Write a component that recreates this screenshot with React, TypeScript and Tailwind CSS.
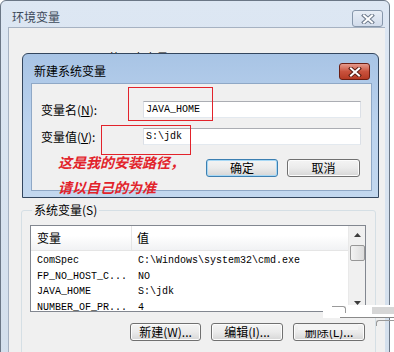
import React from "react";

const cjk = "font-['Noto_Sans_CJK_SC',sans-serif]";
const mono = "font-['Liberation_Mono','Noto_Sans_CJK_SC',monospace]";

const CloseGlyph = ({ dark }: { dark?: boolean }) => (
  <svg width="14" height="10" viewBox="0 0 14 10">
    <path d="M3 1.5 L11 8.5 M11 1.5 L3 8.5" stroke={dark ? "#5a1c12" : "#6d7a8c"} strokeWidth="4" strokeLinecap="square" />
    <path d="M3 1.5 L11 8.5 M11 1.5 L3 8.5" stroke="#ffffff" strokeWidth="2" strokeLinecap="square" />
  </svg>
);

const WinButton = ({ label, primary, className }: { label: React.ReactNode; primary?: boolean; className?: string }) => (
  <div
    className={`h-[18px] rounded-[3px] border flex items-center justify-center text-[12px] leading-none text-black bg-gradient-to-b from-[#f4f4f4] via-[#ebebeb] to-[#d6d6d6] ${
      primary ? "border-[#3c7fb1] shadow-[inset_0_0_0_1px_#a7d8f5]" : "border-[#707070] shadow-[inset_0_0_0_1px_#fcfcfc]"
    } ${cjk} ${className ?? ""}`}
  >
    {label}
  </div>
);

const rows = [
  ["ComSpec", "C:\\Windows\\system32\\cmd.exe"],
  ["FP_NO_HOST_C...", "NO"],
  ["JAVA_HOME", "S:\\jdk"],
  ["NUMBER_OF_PR...", "4"],
];

export default function App() {
  return (
    <div className="relative w-[394px] h-[352px] overflow-hidden bg-white">
      {/* outer window: 环境变量 (inactive) */}
      <div className="w-[390px] h-[380px] rounded-t-[6px] border border-[#6b7786] bg-gradient-to-b from-[#dde7f3] to-[#d3dfec] pl-[7px] pr-[4px] flex flex-col">
        <div className="h-[29px] flex items-start justify-between">
          <span className={`mt-[10px] ml-[4px] text-[12px] leading-none text-[#3d4a5a] ${cjk}`}>环境变量</span>
          <div className="mt-[9px] mr-[2px] w-[31px] h-[17px] rounded-[3px] border border-[#8797ab] bg-gradient-to-b from-[#e8eef6] to-[#d2dceb] flex items-center justify-center">
            <CloseGlyph />
          </div>
        </div>
        <div className="flex-1 border-t border-l border-[#a6b2c2] bg-[#f0f0f0] flex flex-col">
          {/* user variables (hidden behind dialog) */}
          <div className="h-[176px] pl-[20px] pt-[17px]">
            <span className={`text-[12px] leading-none text-black ${cjk}`}>Administrator 的用户变量(U)</span>
          </div>
          {/* system variables group */}
          <fieldset className="ml-[12px] w-[355px] h-[200px] border border-[#d5dfe5] rounded-[3px] px-[8px]">
            <legend className={`ml-[2px] px-[2px] text-[12px] leading-none text-black ${cjk}`}>系统变量(S)</legend>
            <div className="mt-[9px] w-[336px] h-[87px] border border-[#828790] bg-white flex">
              <div className="flex-1 flex flex-col overflow-hidden">
                <div className="h-[25px] shrink-0 flex bg-gradient-to-b from-white from-40% to-[#f1f2f4] border-b border-[#e5e5e5]">
                  <div className={`w-[101px] border-r border-[#e5e5e5] pl-[6px] flex items-center text-[12px] ${cjk}`}>变量</div>
                  <div className={`pl-[5px] flex items-center text-[12px] ${cjk}`}>值</div>
                </div>
                <div className="pt-[2px] overflow-hidden">
                  {rows.map(([k, v]) => (
                    <div key={k} className={`h-[15.5px] flex items-center text-[10px] text-black ${mono}`}>
                      <div className="w-[101px] pl-[6px] whitespace-nowrap">{k}</div>
                      <div className="pl-[6px] whitespace-nowrap">{v}</div>
                    </div>
                  ))}
                </div>
              </div>
              <div className="w-[17px] bg-[#f0f0f0] border-l border-[#e9e9e9] flex flex-col items-center">
                <div className="h-[17px] flex items-center justify-center">
                  <svg width="7" height="4" viewBox="0 0 7 4"><path d="M0 4 L3.5 0 L7 4 Z" fill="#3c3c3c" /></svg>
                </div>
                <div className="mt-[2px] w-[15px] h-[16px] rounded-[2px] border border-[#979797] bg-gradient-to-r from-[#f3f3f3] to-[#dcdcdc]" />
                <div className="flex-1" />
                <div className="h-[17px] flex items-center justify-center">
                  <svg width="7" height="4" viewBox="0 0 7 4"><path d="M0 0 L7 0 L3.5 4 Z" fill="#3c3c3c" /></svg>
                </div>
              </div>
            </div>
            <div className="mt-[11px] mr-[2px] flex justify-end gap-[10px]">
              <WinButton className="w-[71px]" label="新建(W)..." />
              <WinButton className="w-[72px]" label="编辑(I)..." />
              <WinButton className="w-[72px] text-[#6b6b6b]" label="删除(L)..." />
            </div>
          </fieldset>
        </div>
      </div>

      {/* inner dialog: 新建系统变量 (active) */}
      <div className="absolute left-[22px] top-[53px] w-[357px] h-[145px] rounded-t-[6px] border border-[#33465e] bg-gradient-to-b from-[#a8c4e5] via-[#bcd3ee] to-[#c3d8ef] pl-[8px] pr-[6px] pb-[6px] flex flex-col">
        <div className="h-[29px] flex items-start justify-between">
          <span className={`mt-[11px] ml-[3px] text-[12px] leading-none text-black ${cjk}`}>新建系统变量</span>
          <div className="mt-[9px] mr-[2px] w-[31px] h-[17px] rounded-[3px] border border-[#6b1f14] bg-gradient-to-b from-[#e59a8c] via-[#c9523d] to-[#b53a24] flex items-center justify-center">
            <CloseGlyph dark />
          </div>
        </div>
        <div className="flex-1 bg-[#f0f0f0] border border-[#8fa8c6] pl-[9px] pr-[10px] pt-[17px]">
          <div className="grid grid-cols-[102px_1fr] gap-y-[10px] items-center">
            <div className={`text-[12px] leading-none text-black ${cjk}`}>变量名(<span className="underline">N</span>):</div>
            <div className={`h-[17px] bg-white border border-[#abadb3] border-b-[#e3e9ef] border-x-[#dbdfe6] pl-[2px] flex items-center text-[10px] ${mono}`}>JAVA_HOME</div>
            <div className={`text-[12px] leading-none text-black ${cjk}`}>变量值(<span className="underline">V</span>):</div>
            <div className={`h-[17px] bg-white border border-[#abadb3] border-b-[#e3e9ef] border-x-[#dbdfe6] pl-[2px] flex items-center text-[10px] ${mono}`}>S:\jdk</div>
          </div>
          <div className="mt-[14px] mr-[1px] flex justify-end gap-[9px]">
            <WinButton primary className="w-[72px]" label="确定" />
            <WinButton className="w-[73px]" label="取消" />
          </div>
        </div>
      </div>

      {/* red annotations drawn over the screenshot */}
      <div className="absolute left-[128px] top-[87px] w-[85px] h-[34px] border border-[#e2232b]" />
      <div className="absolute left-[101px] top-[125px] w-[90px] h-[30px] border border-[#e2232b]" />
      <div className={`absolute left-[58px] top-[150px] text-[14px] leading-[25px] font-bold italic text-[#e2232b] ${cjk}`}>
        <div>这是我的安装路径，</div>
        <div>请以自己的为准</div>
      </div>

      {/* watermark smudge over the lower right corner */}
      <div className="absolute left-[323px] top-[305px] w-[71px] h-[13px] bg-white" />
      <div className="absolute left-[332px] top-[306px] w-[14px] h-[7px] rounded-tr-[3px] border-t border-r border-[#9a9a9a]" />
      <div className="absolute left-[372px] top-[307px] w-[22px] h-[7px] bg-[#d6d6d6]" />
      <div className="absolute left-[340px] top-[317px] w-[54px] h-px bg-[#8a8a8a]" />
      <div className="absolute left-[376px] top-[320px] w-[18px] h-[6px] rounded-tl-[3px] border-t border-l border-[#9a9a9a]" />
      <div className="absolute left-[298px] top-[324px] w-[60px] h-[6px] bg-[#f4f4f4]" />
    </div>
  );
}
